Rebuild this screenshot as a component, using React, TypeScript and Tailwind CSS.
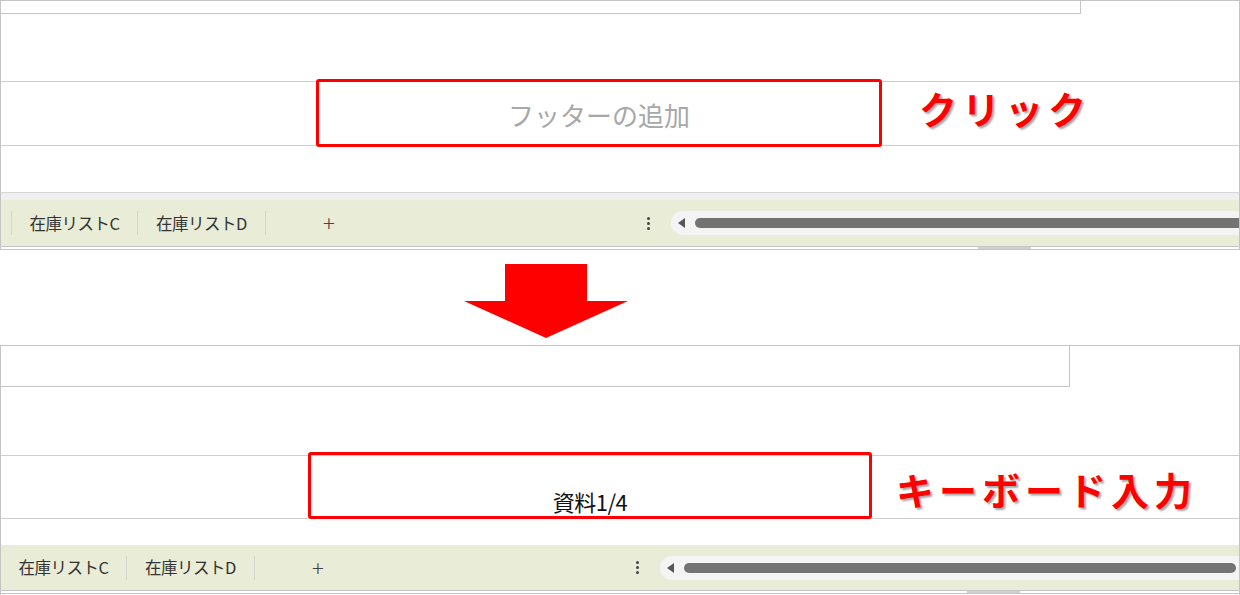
import React from "react";

const jp = { fontFamily: '"Noto Sans CJK JP", "Noto Sans", sans-serif' };

const Sep = () => <div className="w-px h-6 bg-[#d4d6c8] shrink-0" />;

const TabBar = ({ top }: { top: boolean }) => (
    <div className={`flex items-center h-full shrink-0 w-[1250px] ${top ? "ml-0" : "ml-[-11px]"}`} style={jp}>
        <div className="w-[10px] shrink-0" />
        <Sep />
        <div className="w-[125px] shrink-0 text-center text-[16.5px] tracking-[-0.5px] text-[#333]">在庫リストC</div>
        <Sep />
        <div className="w-[127px] shrink-0 text-center text-[16.5px] tracking-[-0.5px] text-[#333]">在庫リストD</div>
        <Sep />
        <div className="w-[126px] shrink-0 flex justify-center text-[22px] font-light text-[#444] leading-none mb-[2px]">+</div>
        <div className="w-[255px] shrink-0" />
        <div className="flex flex-col gap-[2px] shrink-0">
            <span className="w-[3px] h-[3px] bg-[#444] rounded-full" />
            <span className="w-[3px] h-[3px] bg-[#444] rounded-full" />
            <span className="w-[3px] h-[3px] bg-[#444] rounded-full" />
        </div>
        {/* scrollbar */}
        <div className="ml-[21px] flex-1 h-6 bg-[#f4f4f4] rounded-l-full flex items-center pl-[7px]">
            <svg width="8" height="10" viewBox="0 0 8 10"><polygon points="7,0 7,10 0,5" fill="#555" /></svg>
            <div className={`ml-[9px] h-[10px] bg-[#737373] rounded-full flex-1 ${top ? "rounded-r-none" : "mr-[4px]"}`} />
        </div>
    </div>
);

const Panel = (props: { top: boolean }) => {
    const t = props.top;
    return (
        <div className="relative border border-[#c4c4c4] border-b-0 bg-white h-[250px]">
            {/* top inner box edge */}
            <div className={`${t ? "h-[13px] w-[1080px]" : "h-[41px] w-[1069px]"} border-b border-r border-[#c4c4c4]`} />
            <div className={`${t ? "h-[68px]" : "h-[69px]"} border-b border-[#cfcfcf]`} />
            <div className={`${t ? "h-[64px]" : "h-[63px]"} border-b border-[#cfcfcf]`} />
            <div className={`${t ? "h-[47px] border-b border-[#d8d8d8]" : "h-[26px]"}`} />
            {t && <div className="h-[7px] bg-[#efefef]" />}
            <div className={`${t ? "h-[46px]" : "h-[45px]"} bg-[#e9ecd6] overflow-hidden flex`}>
                <TabBar top={t} />
            </div>
            <div className="h-[4px] border-t border-b border-[#c4c4c4] bg-white relative">
                <div className={`absolute top-0 h-[2px] bg-[#d0d0d0] ${t ? "left-[977px] w-[53px]" : "left-[966px] w-[53px]"}`} />
            </div>

            {/* red highlight box */}
            <div
                className={`absolute border-[3px] border-[#ff0000] rounded-[3px] flex justify-center ${
                    t ? "left-[315px] top-[78px] w-[566px] h-[68px] items-center" : "left-[307px] top-[106px] w-[564px] h-[67px] items-end pb-[1px]"
                }`}
                style={jp}
            >
                {t ? (
                    <span className="text-[26px] text-[#a8a8a8] mt-[3px]">フッターの追加</span>
                ) : (
                    <span className="text-[22px] text-[#111] leading-tight tracking-[-0.5px]">資料1/4</span>
                )}
            </div>

            {/* annotation */}
            <div
                className={`absolute font-bold text-[#ff0000] leading-none ${
                    t ? "left-[918px] top-[88px] text-[38px] tracking-[5px]" : "left-[895px] top-[124px] text-[38px] tracking-[5px]"
                }`}
                style={{ ...jp, textShadow: "2px 2px 2px rgba(0,0,0,0.35)" }}
            >
                {t ? "クリック" : "キーボード入力"}
            </div>
        </div>
    );
};

export default function App() {
    return (
        <div className="w-[1240px] h-[595px] bg-white overflow-hidden">
            <Panel top={true} />
            <div className="h-[95px] flex justify-start pl-[464px] pt-[14px]">
                <svg width="164" height="75" viewBox="0 0 164 75">
                    <polygon points="41,0 123,0 123,37 164,37 82,74 0,37 41,37" fill="#ff0000" />
                </svg>
            </div>
            <Panel top={false} />
        </div>
    );
}
